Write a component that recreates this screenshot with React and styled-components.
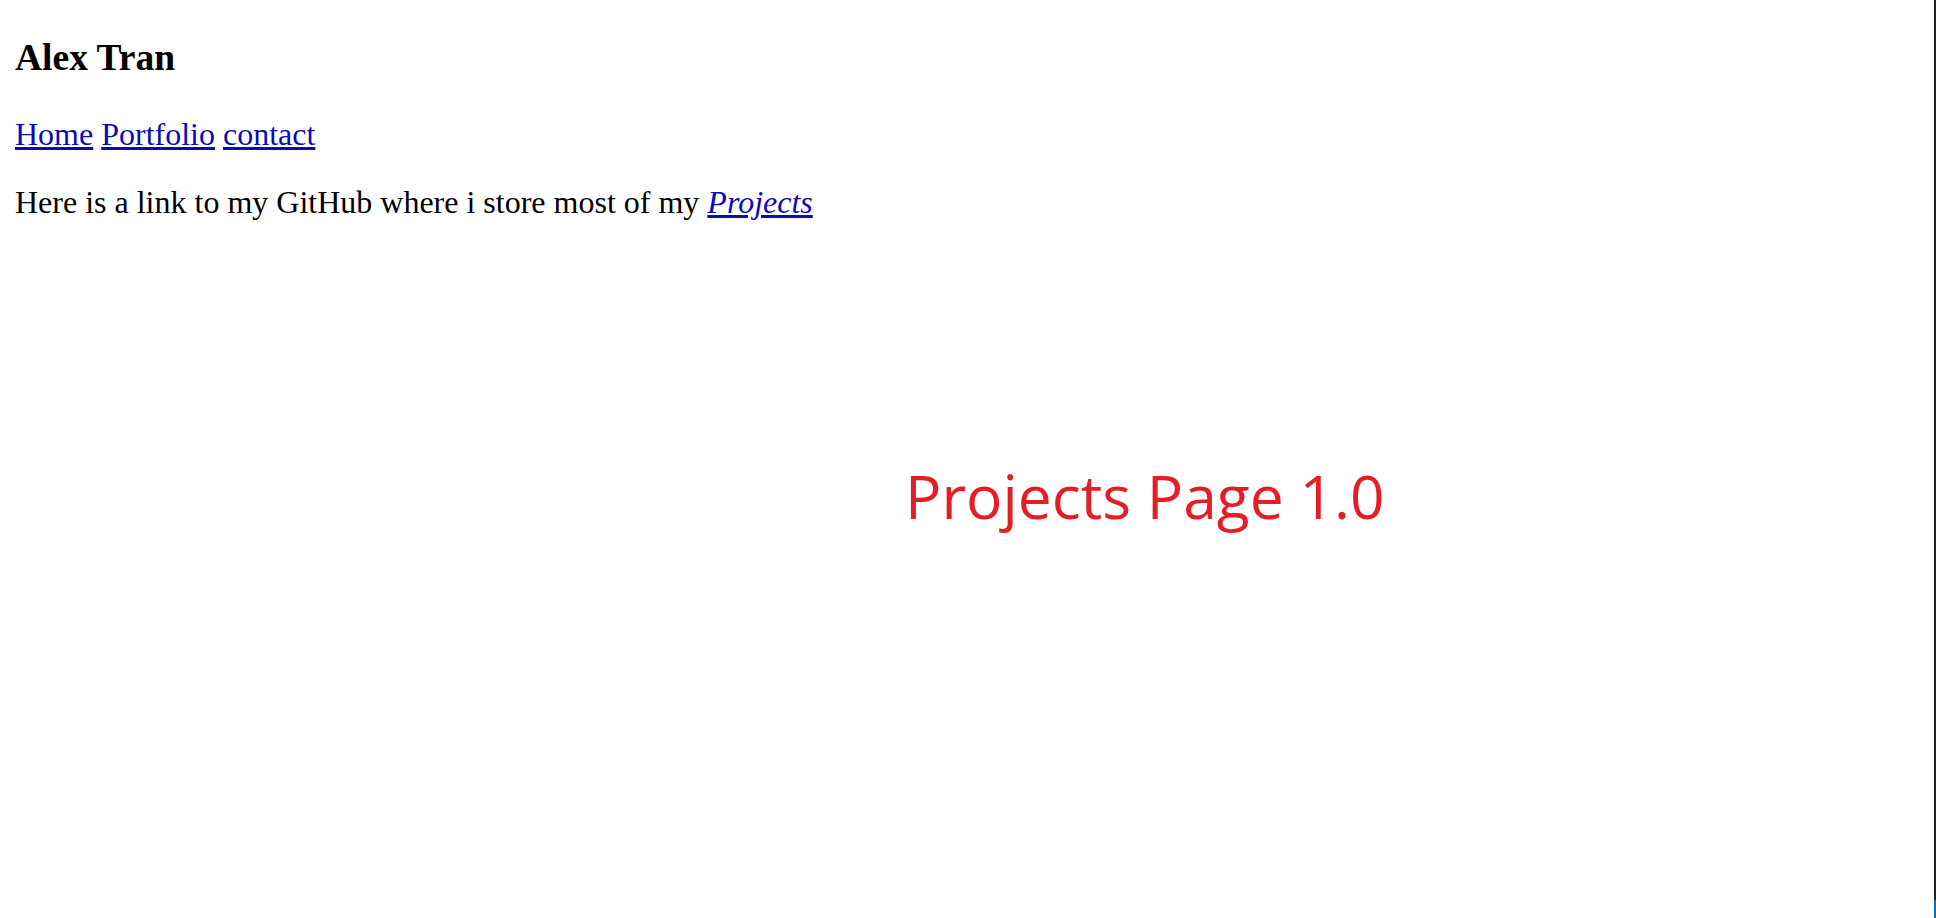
import styled, { createGlobalStyle } from "styled-components";

const Global = createGlobalStyle`
  html, body {
    margin: 0;
    padding: 0;
    background: #ffffff;
  }
  body {
    font-family: "Liberation Serif", "Times New Roman", serif;
    color: #000000;
  }
`;

const Page = styled.div`
  display: flex;
  height: 100vh;
  overflow: hidden;
`;

const Content = styled.main`
  flex: 1;
  padding: 0 15px;
`;

const Edge = styled.div`
  width: 2px;
  display: flex;
  flex-direction: column;
  background: #1f1f1f;
  &::after {
    content: "";
    margin-top: auto;
    height: 18px;
    background: #0a6fc2;
  }
`;

const Name = styled.h3`
  margin: 37px 0 37px;
  font-size: 37.5px;
  line-height: 42px;
  font-weight: 700;
`;

const Nav = styled.nav`
  font-size: 32px;
  line-height: 36px;
  margin: 0 0 32px;
  display: flex;
  gap: 8px;
`;

const Link = styled.a`
  color: #0c0cb4;
  text-decoration: underline;
  font-style: ${(p) => (p.$italic ? "italic" : "normal")};
`;

const Text = styled.p`
  margin: 0;
  font-size: 32px;
  line-height: 36px;
`;

const Banner = styled.h1`
  margin: 240px 0 0 890px;
  font-family: "Open Sans", "Noto Sans", sans-serif;
  font-weight: 400;
  font-size: 60.5px;
  line-height: 1.2;
  color: #e31e26;
  white-space: nowrap;
`;

const links = ["Home", "Portfolio", "contact"];

export default function App() {
  return (
    <>
      <Global />
      <Page>
        <Content>
          <Name>Alex Tran</Name>
          <Nav>
            {links.map((l) => (
              <Link key={l} href="#">
                {l}
              </Link>
            ))}
          </Nav>
          <Text>
            Here is a link to my GitHub where i store most of my{" "}
            <Link $italic href="#">
              Projects
            </Link>
          </Text>
          <Banner>Projects Page 1.0</Banner>
        </Content>
        <Edge />
      </Page>
    </>
  );
}
